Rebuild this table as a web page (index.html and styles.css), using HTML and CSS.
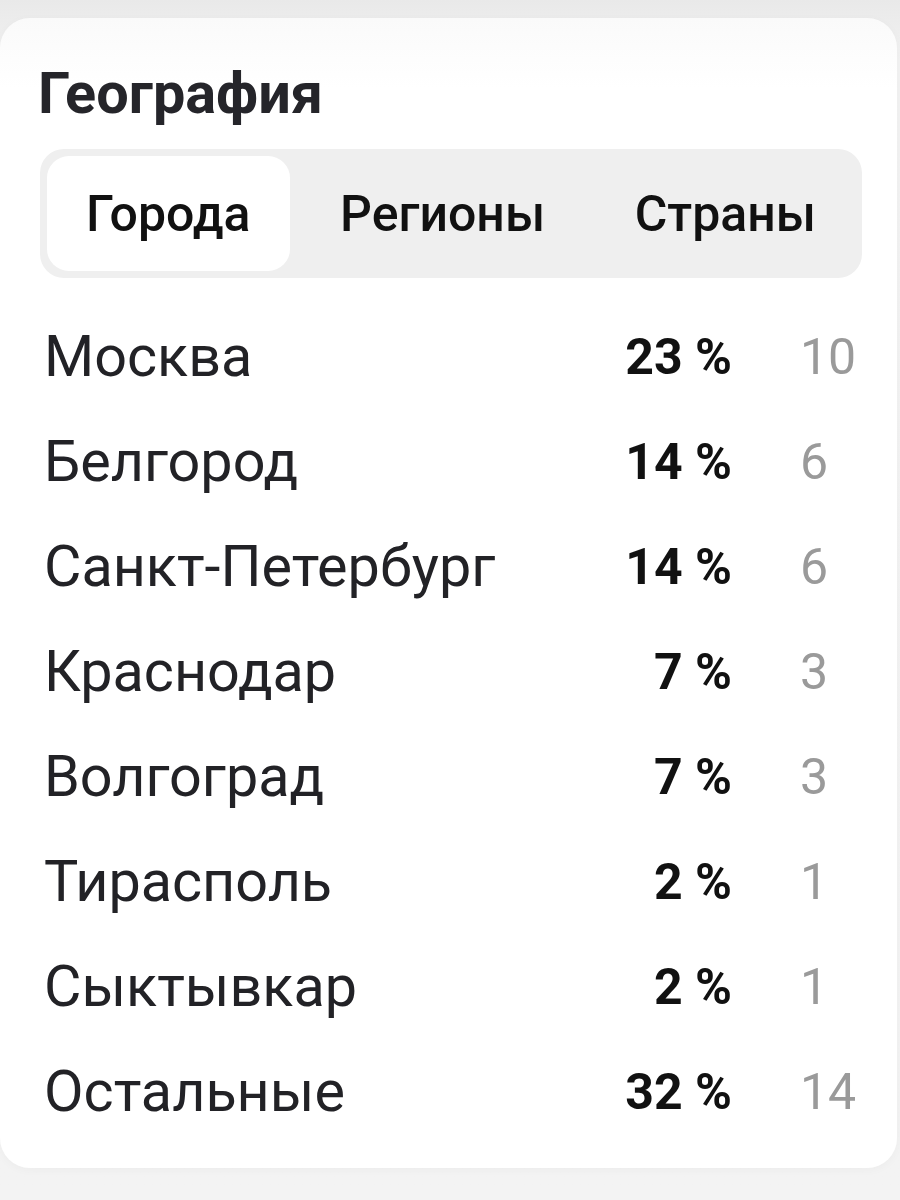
FILE: index.html
```html
<!doctype html>
<html lang="ru">
  <head>
    <meta charset="UTF-8" />
    <meta name="viewport" content="width=device-width, initial-scale=1.0" />
    <title>География</title>
    <link rel="stylesheet" href="styles.css">
  </head>

  <body>
    <section class="geo-card">
      <h2 class="geo-title">География</h2>

      <div class="tabs">
        <button class="tab active">Города</button>
        <button class="tab">Регионы</button>
        <button class="tab">Страны</button>
      </div>

      <ul class="geo-list">
        <li class="geo-row">
          <span class="name">Москва</span>
          <span class="pct">23 %</span>
          <span class="count">10</span>
        </li>
        <li class="geo-row">
          <span class="name">Белгород</span>
          <span class="pct">14 %</span>
          <span class="count">6</span>
        </li>
        <li class="geo-row">
          <span class="name">Санкт-Петербург</span>
          <span class="pct">14 %</span>
          <span class="count">6</span>
        </li>
        <li class="geo-row">
          <span class="name">Краснодар</span>
          <span class="pct">7 %</span>
          <span class="count">3</span>
        </li>
        <li class="geo-row">
          <span class="name">Волгоград</span>
          <span class="pct">7 %</span>
          <span class="count">3</span>
        </li>
        <li class="geo-row">
          <span class="name">Тирасполь</span>
          <span class="pct">2 %</span>
          <span class="count">1</span>
        </li>
        <li class="geo-row">
          <span class="name">Сыктывкар</span>
          <span class="pct">2 %</span>
          <span class="count">1</span>
        </li>
        <li class="geo-row">
          <span class="name">Остальные</span>
          <span class="pct">32 %</span>
          <span class="count">14</span>
        </li>
      </ul>
    </section>
  </body>
</html>
```

FILE: styles.css
```css
body {
  margin: 0;
  padding-top: 18px;
  height: 1182px;
  background: linear-gradient(to bottom, #e9e9e9 0, #f2f2f2 60px, #f3f3f3 100%);
  font-family: Roboto, "Noto Sans", sans-serif;
}

.geo-card {
  box-sizing: border-box;
  width: 897px;
  height: 1150px;
  padding: 41px 38px 0 40px;
  background: linear-gradient(to bottom, #fafafa 0, #ffffff 70px);
  border-radius: 30px;
  box-shadow: 0 2px 10px rgba(0, 0, 0, 0.03);
}

.geo-title {
  margin: 0 0 21px -2px;
  font-size: 57.6px;
  line-height: 1.2;
  font-weight: 700;
  color: #25252a;
}

.tabs {
  display: flex;
  justify-content: space-between;
  margin-right: -3px;
  padding: 7px;
  background: #efefef;
  border-radius: 24px;

  & .tab {
    height: 115px;
    padding: 0 39px;
    border: 0;
    border-radius: 22px;
    background: transparent;
    font-family: inherit;
    font-size: 50px;
    font-weight: 500;
    color: #111;
  }

  & .tab.active {
    background: #fff;
  }
}

.geo-list {
  list-style: none;
  margin: 26px 0 0;
  padding: 0;
}

.geo-row {
  display: grid;
  grid-template-columns: 1fr auto 127px;
  align-items: center;
  height: 105px;
  padding-left: 4px;

  & .name {
    font-size: 57.5px;
    color: #222226;
  }

  & .pct {
    text-align: right;
    font-size: 50px;
    font-weight: 700;
    color: #111;
  }

  & .count {
    padding-left: 68px;
    font-size: 50px;
    color: #9a9a9a;
  }
}
```
